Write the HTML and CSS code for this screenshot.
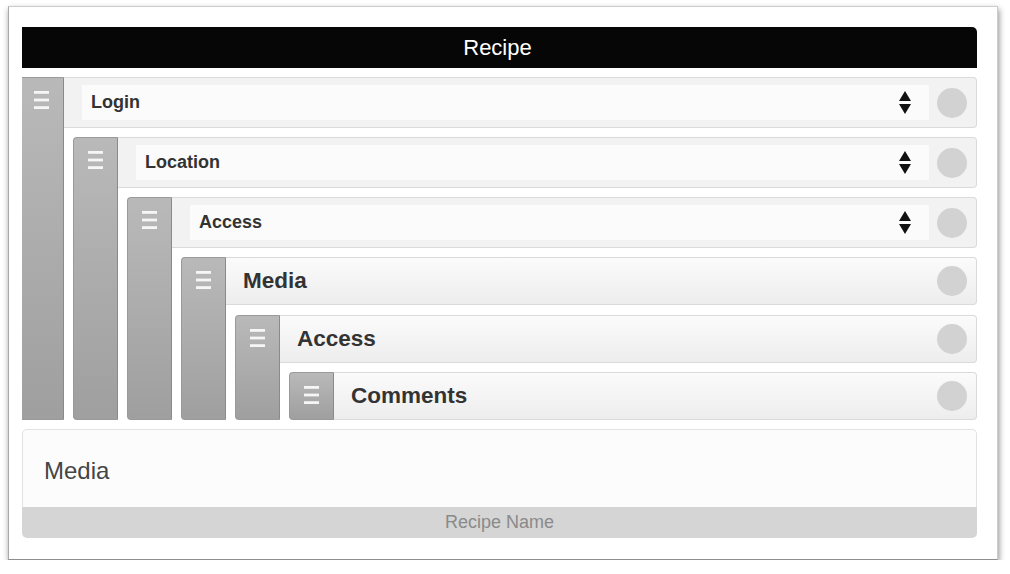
FILE: index.html
```html
<!DOCTYPE html>
<html>
<head>
<meta charset="utf-8">
<link rel="stylesheet" href="styles.css">
</head>
<body>
<div class="frame">
  <div class="tree">
    <div class="title">Recipe</div>
    <div class="level level-root">
      <div class="handle"><svg class="grip" width="15" height="18" viewBox="0 0 15 18"><rect y="0" width="15" height="2.8"/><rect y="7.6" width="15" height="2.8"/><rect y="15.2" width="15" height="2.8"/></svg></div>
      <div class="branch">
        <div class="head head-select">
          <div class="select"><span class="label">Login</span><svg class="arrows" width="12" height="24" viewBox="0 0 12 24"><polygon points="6,0 12,10 0,10"/><polygon points="0,13 12,13 6,23"/></svg></div>
          <span class="dot"></span>
        </div>
        <div class="level">
          <div class="handle"><svg class="grip" width="15" height="18" viewBox="0 0 15 18"><rect y="0" width="15" height="2.8"/><rect y="7.6" width="15" height="2.8"/><rect y="15.2" width="15" height="2.8"/></svg></div>
          <div class="branch">
            <div class="head head-select">
              <div class="select"><span class="label">Location</span><svg class="arrows" width="12" height="24" viewBox="0 0 12 24"><polygon points="6,0 12,10 0,10"/><polygon points="0,13 12,13 6,23"/></svg></div>
              <span class="dot"></span>
            </div>
            <div class="level">
              <div class="handle"><svg class="grip" width="15" height="18" viewBox="0 0 15 18"><rect y="0" width="15" height="2.8"/><rect y="7.6" width="15" height="2.8"/><rect y="15.2" width="15" height="2.8"/></svg></div>
              <div class="branch">
                <div class="head head-select">
                  <div class="select"><span class="label">Access</span><svg class="arrows" width="12" height="24" viewBox="0 0 12 24"><polygon points="6,0 12,10 0,10"/><polygon points="0,13 12,13 6,23"/></svg></div>
                  <span class="dot"></span>
                </div>
                <div class="level">
                  <div class="handle"><svg class="grip" width="15" height="18" viewBox="0 0 15 18"><rect y="0" width="15" height="2.8"/><rect y="7.6" width="15" height="2.8"/><rect y="15.2" width="15" height="2.8"/></svg></div>
                  <div class="branch branch-wide">
                    <div class="head head-plain">
                      <span class="label label-big">Media</span>
                      <span class="dot"></span>
                    </div>
                    <div class="level">
                      <div class="handle"><svg class="grip" width="15" height="18" viewBox="0 0 15 18"><rect y="0" width="15" height="2.8"/><rect y="7.6" width="15" height="2.8"/><rect y="15.2" width="15" height="2.8"/></svg></div>
                      <div class="branch">
                        <div class="head head-plain">
                          <span class="label label-big">Access</span>
                          <span class="dot"></span>
                        </div>
                        <div class="level">
                          <div class="handle"><svg class="grip" width="15" height="18" viewBox="0 0 15 18"><rect y="0" width="15" height="2.8"/><rect y="7.6" width="15" height="2.8"/><rect y="15.2" width="15" height="2.8"/></svg></div>
                          <div class="branch">
                            <div class="head head-plain">
                              <span class="label label-big">Comments</span>
                              <span class="dot"></span>
                            </div>
                          </div>
                        </div>
                      </div>
                    </div>
                  </div>
                </div>
              </div>
            </div>
          </div>
        </div>
      </div>
    </div>
  </div>
  <div class="card">
    <div class="card-body">Media</div>
    <div class="card-foot">Recipe Name</div>
  </div>
</div>
</body>
</html>
```

FILE: styles.css
```css
html, body {
  margin: 0;
  padding: 0;
  background: #ffffff;
}

body {
  font-family: "Liberation Sans", Arial, sans-serif;
}

.frame {
  box-sizing: border-box;
  width: 990px;
  height: 554px;
  margin: 6px 0 0 8px;
  padding: 20px 20px 0 13px;
  background: #ffffff;
  border: 1px solid #cccccc;
  border-left-color: #a8a8a8;
  border-bottom-color: #8e8e8e;
  box-shadow: 1px 3px 6px rgba(0, 0, 0, 0.45);
  display: flex;
  flex-direction: column;
  gap: 9px;
}

.tree {
  display: flex;
  flex-direction: column;
  gap: 9px;
  overflow: hidden;
}

.title {
  height: 41px;
  margin-left: -4px;
  background: #060606;
  border-radius: 5px 5px 0 0;
  color: #ffffff;
  font-size: 22px;
  line-height: 41px;
  text-align: center;
}

.level {
  display: flex;
  margin-left: 9px;
}

.level-root {
  margin-left: -3px;
  height: 343px;
}

.handle {
  flex: none;
  box-sizing: border-box;
  width: 45px;
  padding-top: 13px;
  display: flex;
  justify-content: center;
  align-items: flex-start;
  background: linear-gradient(#b9b9b9, #9f9f9f);
  border: 1px solid #9a9a9a;
  border-right-color: #8a8a8a;
  border-radius: 4px 0 0 4px;
}

.grip rect {
  fill: #f6f6f6;
}

.branch {
  flex: 1;
  display: flex;
  flex-direction: column;
  gap: 9px;
  min-width: 0;
}

.branch-wide {
  gap: 10px;
}

.level .level {
  flex: 1;
}

.head {
  flex: none;
  box-sizing: border-box;
  display: flex;
  align-items: center;
  border: 1px solid #dadada;
  border-left: 0;
  border-radius: 0 4px 4px 0;
}

.head-select {
  height: 51px;
  background: #f2f2f2;
}

.head-plain {
  height: 48px;
  padding-left: 17px;
  background: linear-gradient(#fbfbfb, #ededed);
}

.select {
  flex: 1;
  height: 35px;
  margin-left: 18px;
  padding: 0 18px 0 9px;
  display: flex;
  align-items: center;
  justify-content: space-between;
  background: #fbfbfb;
}

.arrows polygon {
  fill: #111111;
}

.label {
  color: #333333;
  font-weight: bold;
  font-size: 18px;
}

.label-big {
  font-size: 22.5px;
}

.dot {
  flex: none;
  width: 30px;
  height: 30px;
  margin: 0 9px 0 8px;
  border-radius: 50%;
  background: #d2d2d2;
}

.head-plain .dot {
  margin-left: auto;
}

.card {
  display: flex;
  flex-direction: column;
}

.card-body {
  box-sizing: border-box;
  height: 78px;
  padding: 27px 21px 0;
  background: #fcfcfc;
  border: 1px solid #e2e2e2;
  border-bottom: 0;
  border-radius: 5px 5px 0 0;
  color: #454545;
  font-size: 24px;
  line-height: 28px;
}

.card-foot {
  height: 31px;
  background: #d5d5d5;
  border-radius: 0 0 5px 5px;
  color: #8a8a8a;
  font-size: 18px;
  line-height: 31px;
  text-align: center;
}
```
